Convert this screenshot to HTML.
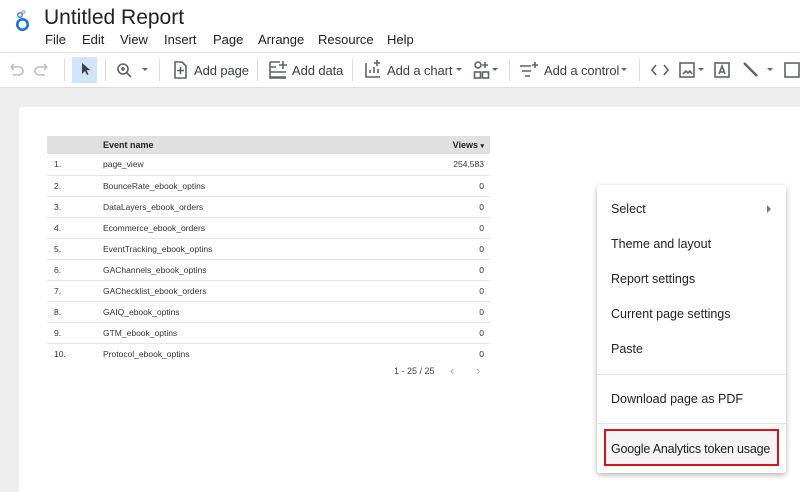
<!DOCTYPE html>
<html><head><meta charset="utf-8"><style>
*{margin:0;padding:0;box-sizing:border-box}
body{width:800px;height:492px;overflow:hidden;background:#fff;font-family:"Liberation Sans",Arial,sans-serif;position:relative;color:#202124}
.abs{position:absolute}
.title{left:44px;top:6px;font-size:21px;color:#202124}
.menu{top:32px;font-size:13px;color:#202124}
.tb{top:52px;left:0;width:800px;height:36px;border-top:1px solid #e8e8e8;border-bottom:1px solid #ddd;background:#fff}
.tbt{font-size:13px;color:#3c4043;top:63px;letter-spacing:-0.1px}
.sep{width:1px;height:22px;background:#dadce0;top:59px}
.canvasbg{top:88px;left:0;width:800px;height:404px;background:#eeeeee}
.canvas{top:107px;left:19px;width:781px;height:385px;background:#fff}
table{position:absolute;left:47px;top:136px;width:443px;border-collapse:collapse;font-size:8.5px;color:#333}
th{background:#e0e0e0;height:18px;font-weight:bold;text-align:left;font-size:9px;color:#222}
td{height:21px;border-bottom:1px solid #e6e6e6}
tr.last td{border-bottom:none}
td.r,th.r{text-align:right;padding-right:6px}
td.n{padding-left:7px;width:56px}
.ctx{left:597px;top:185px;width:189px;height:288px;background:#fff;border-radius:3px;box-shadow:0 2px 6px rgba(0,0,0,.3)}
.it{position:absolute;left:14px;font-size:12.5px;color:#202124;white-space:nowrap}
.hr{position:absolute;left:0;width:189px;height:1px;background:#e4e4e4}
</style></head><body>
<svg class="abs" style="left:13px;top:8px" width="26" height="28" viewBox="0 0 26 28"><circle cx="7" cy="7" r="2.3" fill="none" stroke="#4285f4" stroke-width="1.5"/><circle cx="10.5" cy="4" r="1.4" fill="none" stroke="#8ab4f8" stroke-width="1.2"/><circle cx="9.5" cy="16.5" r="5.2" fill="none" stroke="#1a73e8" stroke-width="2.6"/></svg>
<div class="abs title">Untitled Report</div>
<div class="abs menu" style="left:45px">File</div>
<div class="abs menu" style="left:82px">Edit</div>
<div class="abs menu" style="left:120px">View</div>
<div class="abs menu" style="left:164px">Insert</div>
<div class="abs menu" style="left:213px">Page</div>
<div class="abs menu" style="left:258px">Arrange</div>
<div class="abs menu" style="left:318px">Resource</div>
<div class="abs menu" style="left:387px">Help</div>
<div class="abs tb"></div>
<svg class="abs" style="left:0;top:53px" width="800" height="34" viewBox="0 0 800 34" fill="none" stroke="#5f6368" stroke-width="1.6">
<path d="M11 14h8a4 4 0 010 8h-6M11 14l3-3M11 14l3 3" stroke="#bdbdbd"/>
<path d="M47 14h-8a4 4 0 000 8h6M47 14l-3-3M47 14l-3 3" stroke="#bdbdbd"/>
<rect x="72" y="4" width="25" height="26" fill="#d2e3fc" stroke="none"/>
<path d="M82 10l0 11 3-3 2 4 1.5-.7-2-4 4 0z" fill="#3c4043" stroke="none"/>
<circle cx="123" cy="16" r="5"/><path d="M127 20l4 4M121 16h4M123 14v4"/>
<path d="M142 15l3 3 3-3z" fill="#5f6368" stroke="none"/>
<path d="M175 9h7l4 4v12h-11z M180.5 14v7M177 17.5h7"/>
<path d="M270 9h10M270 9v16h16M270 14h6M270 19h16M270 24h16M283 8v8M279 12h8"/>
<path d="M366 10v14h14M370 20v-3M374 20v-6M378 20v-4M377 7v6M374 10h6"/>
<path d="M456 15l3 3 3-3z" fill="#5f6368" stroke="none"/>
<circle cx="478" cy="12" r="3"/><rect x="474.5" y="19" width="6" height="6"/><rect x="482.5" y="19" width="6" height="6"/><path d="M485 9v6M482 12h6"/>
<path d="M492 15l3 3 3-3z" fill="#5f6368" stroke="none"/>
<path d="M520 13h11M522 18h9M525 23h5M535 9v6M532 12h6"/>
<path d="M621 15l3 3 3-3z" fill="#5f6368" stroke="none"/>
<path d="M656 12l-4 5 4 5M664 12l4 5-4 5"/>
<rect x="680" y="10" width="14" height="14"/><path d="M683 21l3-3 2 2 2-2 2 3" />
<path d="M698 15l3 3 3-3z" fill="#5f6368" stroke="none"/>
<rect x="715" y="10" width="14" height="14"/><path d="M719 21l3-8 3 8M720 19h4"/>
<path d="M744 10l13 13" stroke-width="2.4"/>
<path d="M767 15l3 3 3-3z" fill="#5f6368" stroke="none"/>
<rect x="785" y="10" width="14" height="14"/>
</svg>
<div class="abs sep" style="left:64px"></div>
<div class="abs sep" style="left:105px"></div>
<div class="abs sep" style="left:159px"></div>
<div class="abs sep" style="left:257px"></div>
<div class="abs sep" style="left:352px"></div>
<div class="abs sep" style="left:509px"></div>
<div class="abs sep" style="left:639px"></div>
<div class="abs tbt" style="left:194px">Add page</div>
<div class="abs tbt" style="left:292px">Add data</div>
<div class="abs tbt" style="left:387px">Add a chart</div>
<div class="abs tbt" style="left:544px">Add a control</div>
<div class="abs canvasbg"></div>
<div class="abs canvas"></div>
<table>
<tr><th></th><th>Event name</th><th class="r">Views <span style="font-size:7px">&#9662;</span></th></tr>
<tr><td class="n">1.</td><td>page_view</td><td class="r">254,583</td></tr>
<tr><td class="n">2.</td><td>BounceRate_ebook_optins</td><td class="r">0</td></tr>
<tr><td class="n">3.</td><td>DataLayers_ebook_orders</td><td class="r">0</td></tr>
<tr><td class="n">4.</td><td>Ecommerce_ebook_orders</td><td class="r">0</td></tr>
<tr><td class="n">5.</td><td>EventTracking_ebook_optins</td><td class="r">0</td></tr>
<tr><td class="n">6.</td><td>GAChannels_ebook_optins</td><td class="r">0</td></tr>
<tr><td class="n">7.</td><td>GAChecklist_ebook_orders</td><td class="r">0</td></tr>
<tr><td class="n">8.</td><td>GAIQ_ebook_optins</td><td class="r">0</td></tr>
<tr><td class="n">9.</td><td>GTM_ebook_optins</td><td class="r">0</td></tr>
<tr class="last"><td class="n">10.</td><td>Protocol_ebook_optins</td><td class="r">0</td></tr>
</table>
<div class="abs" style="left:394px;top:366px;font-size:9px;color:#444">1 - 25 / 25</div>
<div class="abs" style="left:450px;top:363px;font-size:13px;color:#aaa">&#8249;</div>
<div class="abs" style="left:476px;top:363px;font-size:13px;color:#aaa">&#8250;</div>
<div class="abs ctx">
<div class="it" style="top:17px">Select</div>
<div class="abs" style="left:170px;top:20px;width:0;height:0;border-left:4px solid #757575;border-top:4px solid transparent;border-bottom:4px solid transparent"></div>
<div class="it" style="top:52px">Theme and layout</div>
<div class="it" style="top:87px">Report settings</div>
<div class="it" style="top:122px">Current page settings</div>
<div class="it" style="top:157px">Paste</div>
<div class="hr" style="top:189px"></div>
<div class="it" style="top:207px">Download page as PDF</div>
<div class="hr" style="top:238px"></div>
<div class="abs" style="left:7px;top:244px;width:175px;height:37px;background:#f4f4f4;border:2px solid #e0101a"></div>
<div class="it" style="top:257px;letter-spacing:-0.2px">Google Analytics token usage</div>
</div>
</body></html>
